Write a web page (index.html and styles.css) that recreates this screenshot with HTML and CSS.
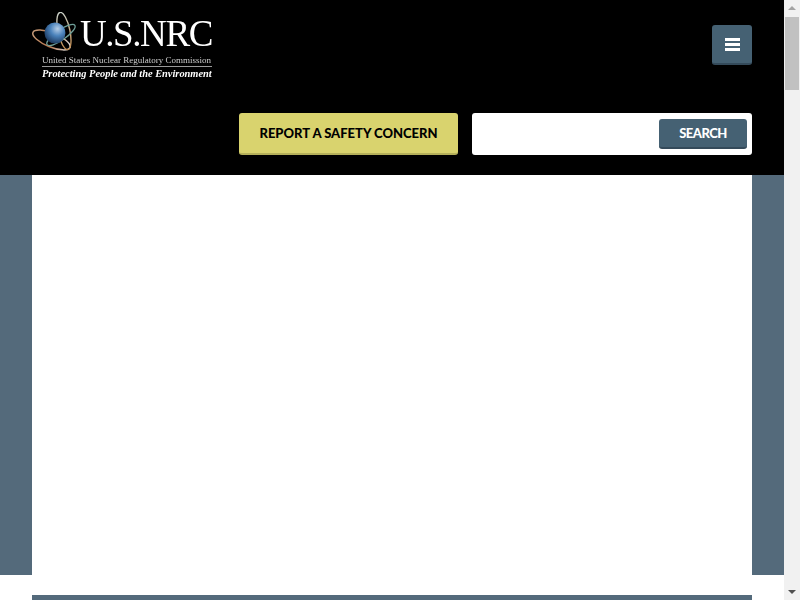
FILE: index.html
```html
<!DOCTYPE html>
<html>
<head>
    <title>U.S. NRC</title>
    <link rel="stylesheet" href="styles.css">
</head>
<body>
    <div class="pagina">
        <header class="cabecera">
            <div class="fila-logo">
                <a class="logo" href="#">
                    <div class="logo-marca">
                        <svg class="atomo" width="48" height="42" viewBox="0 0 48 42">
                            <defs>
                                <radialGradient id="esfera" cx="0.62" cy="0.3" r="0.75">
                                    <stop offset="0" stop-color="#b5cde6"/>
                                    <stop offset="0.45" stop-color="#4a82bb"/>
                                    <stop offset="1" stop-color="#1a3458"/>
                                </radialGradient>
                                <linearGradient id="orbita-a" x1="0" y1="0" x2="1" y2="0">
                                    <stop offset="0" stop-color="#c49a78"/>
                                    <stop offset="0.5" stop-color="#b8744a"/>
                                    <stop offset="1" stop-color="#dcdcdc"/>
                                </linearGradient>
                                <linearGradient id="orbita-c" x1="0" y1="0" x2="1" y2="0">
                                    <stop offset="0" stop-color="#c9d0c8"/>
                                    <stop offset="1" stop-color="#c08a4e"/>
                                </linearGradient>
                            </defs>
                            <ellipse cx="19.5" cy="28" rx="20" ry="7" transform="rotate(22 19.5 28)" fill="none" stroke="url(#orbita-a)" stroke-width="1.5"/>
                            <ellipse cx="32" cy="19" rx="19" ry="6" transform="rotate(78 32 19)" fill="none" stroke="url(#orbita-c)" stroke-width="1.4"/>
                            <ellipse cx="29" cy="23" rx="17" ry="5" transform="rotate(-35 29 23)" fill="none" stroke="#6f9f98" stroke-width="1.3"/>
                            <circle cx="23" cy="21" r="10.5" fill="url(#esfera)"/>
                        </svg>
                        <span class="logo-siglas">U.S.NRC</span>
                    </div>
                    <div class="logo-nombre">United States Nuclear Regulatory Commission</div>
                    <div class="logo-lema">Protecting People and the Environment</div>
                </a>
                <button class="boton-menu" aria-label="Menu">
                    <span></span><span></span><span></span>
                </button>
            </div>
            <div class="fila-acciones">
                <a class="boton-reporte" href="#">REPORT A SAFETY CONCERN</a>
                <form class="busqueda">
                    <input class="busqueda-texto" type="text">
                    <button class="busqueda-boton">SEARCH</button>
                </form>
            </div>
        </header>

        <section class="banda">
            <div class="banda-interior"></div>
        </section>

        <main class="contenido">
            <div class="barra"></div>
        </main>
    </div>

    <div class="scroll">
        <div class="flecha-arriba"></div>
        <div class="scroll-pista">
            <div class="scroll-pulgar"></div>
        </div>
        <div class="flecha-abajo"></div>
    </div>
</body>
</html>
```

FILE: styles.css
```css
html, body {
    height: 100%;
}

body {
    margin: 0;
    display: flex;
    overflow: hidden;
    background: #fff;
    font-family: Lato, Arial, sans-serif;
}

.pagina {
    flex: 1;
    min-width: 0;
}

/* Cabecera negra */
.cabecera {
    background: #000;
    height: 175px;
    box-sizing: border-box;
    padding: 12px 32px 0;
}

.fila-logo {
    display: flex;
    justify-content: space-between;
    align-items: flex-start;
    height: 101px;
}

.logo {
    display: block;
    width: 180px;
    color: #fff;
    text-decoration: none;
    font-family: "Liberation Serif", serif;
    filter: blur(0.4px);
}

.logo-marca {
    display: flex;
    height: 42px;
    align-items: flex-end;
}

.logo-siglas {
    margin-bottom: 6px;
    font-size: 37px;
    line-height: 28px;
    letter-spacing: -1.4px;
    white-space: nowrap;
}

.logo-nombre {
    margin: 1px 0 0 10px;
    padding-bottom: 1px;
    border-bottom: 1px solid #999;
    font-size: 9px;
    line-height: 10px;
    white-space: nowrap;
    color: #ccc;
}

.logo-lema {
    margin-left: 10px;
    font-size: 10.4px;
    line-height: 14px;
    font-style: italic;
    font-weight: bold;
    white-space: nowrap;
}

.boton-menu {
    margin-top: 13px;
    width: 40px;
    height: 40px;
    padding: 0;
    display: flex;
    flex-direction: column;
    align-items: center;
    justify-content: center;
    gap: 2px;
    background: #456173;
    border: 0;
    border-bottom: 2px solid #344a5a;
    border-radius: 3px;
}

.boton-menu span {
    display: block;
    width: 15px;
    height: 3px;
    background: #fff;
}

.fila-acciones {
    display: flex;
    justify-content: flex-end;
    gap: 14px;
}

.boton-reporte {
    display: flex;
    align-items: center;
    justify-content: center;
    box-sizing: border-box;
    width: 219px;
    height: 42px;
    background: #d9d36e;
    border-bottom: 2px solid #b5b05a;
    border-radius: 3px;
    color: #000;
    font-size: 13px;
    font-weight: 900;
    text-decoration: none;
}

.busqueda {
    display: flex;
    align-items: center;
    justify-content: space-between;
    box-sizing: border-box;
    width: 280px;
    height: 42px;
    padding: 0 5px;
    background: #fff;
    border-radius: 3px;
}

.busqueda-texto {
    flex: 1;
    min-width: 0;
    border: 0;
    outline: 0;
}

.busqueda-boton {
    width: 88px;
    height: 30px;
    padding: 0;
    background: #456173;
    border: 0;
    border-bottom: 2px solid #344a5a;
    border-radius: 3px;
    color: #fff;
    font-family: Lato, Arial, sans-serif;
    font-size: 13px;
    font-weight: 900;
    letter-spacing: -0.5px;
}

/* Banda bajo la cabecera */
.banda {
    background: #546a7b;
    padding: 0 32px;
}

.banda-interior {
    background: #fff;
    height: 400px;
}

.contenido {
    padding: 20px 32px 0;
}

.barra {
    background: #546a7b;
    height: 5px;
}

/* Barra de desplazamiento */
.scroll {
    width: 16px;
    display: flex;
    flex-direction: column;
    align-items: center;
    background: #f1f1f1;
}

.scroll-pista {
    flex: 1;
    align-self: stretch;
}

.scroll-pulgar {
    height: 73px;
    margin: 0 1px;
    background: #c1c1c1;
}

.flecha-arriba,
.flecha-abajo {
    width: 0;
    height: 0;
    border-left: 4px solid transparent;
    border-right: 4px solid transparent;
}

.flecha-arriba {
    margin: 6px 0 7px;
    border-bottom: 4px solid #a3a3a3;
}

.flecha-abajo {
    margin: 7px 0 6px;
    border-top: 4px solid #505050;
}
```
